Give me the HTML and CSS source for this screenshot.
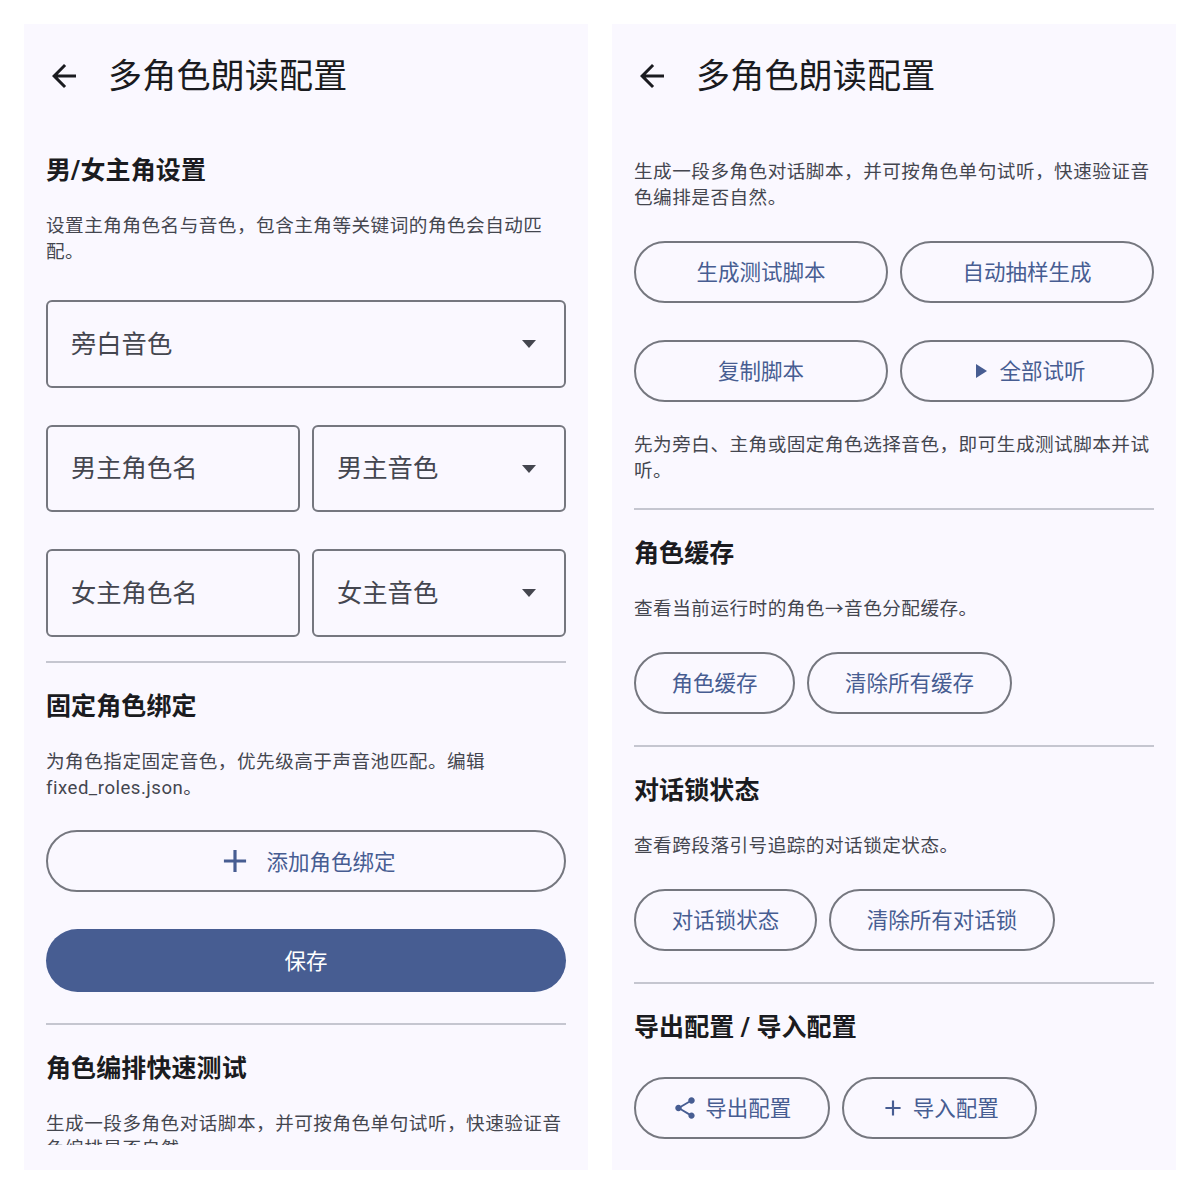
FILE: index.html
```html
<!DOCTYPE html>
<html lang="zh-CN">
<head>
    <meta charset="UTF-8">
    <meta name="viewport" content="width=device-width, initial-scale=1.0">
    <title>多角色朗读配置</title>
    <link rel="stylesheet" href="styles.css">
</head>
<body>
    <!-- Layar kiri -->
    <section class="screen">
        <header class="app-bar">
            <svg class="back-icon" viewBox="0 0 24 24"><path d="M20 11H7.83l5.59-5.59L12 4l-8 8 8 8 1.41-1.41L7.83 13H20v-2z"/></svg>
            <h1>多角色朗读配置</h1>
        </header>
        <div class="content content-top">
            <h2 class="heading">男/女主角设置</h2>
            <p class="desc">设置主角角色名与音色，包含主角等关键词的角色会自动匹配。</p>
            <div class="field field-first"><span>旁白音色</span><i class="caret"></i></div>
            <div class="field-row">
                <div class="field"><span>男主角色名</span></div>
                <div class="field"><span>男主音色</span><i class="caret"></i></div>
            </div>
            <div class="field-row">
                <div class="field"><span>女主角色名</span></div>
                <div class="field"><span>女主音色</span><i class="caret"></i></div>
            </div>
            <hr class="divider divider-fields">
            <h2 class="heading">固定角色绑定</h2>
            <p class="desc">为角色指定固定音色，优先级高于声音池匹配。编辑 fixed_roles.json。</p>
            <button class="btn btn-wide btn-add">
                <svg class="icon-add" viewBox="0 0 24 24"><path d="M19 13h-6v6h-2v-6H5v-2h6V5h2v6h6v2z"/></svg>
                <span>添加角色绑定</span>
            </button>
            <button class="btn-save"><span>保存</span></button>
            <hr class="divider divider-save">
            <h2 class="heading">角色编排快速测试</h2>
            <p class="desc">生成一段多角色对话脚本，并可按角色单句试听，快速验证音色编排是否自然。</p>
        </div>
    </section>

    <!-- Layar kanan -->
    <section class="screen">
        <header class="app-bar">
            <svg class="back-icon" viewBox="0 0 24 24"><path d="M20 11H7.83l5.59-5.59L12 4l-8 8 8 8 1.41-1.41L7.83 13H20v-2z"/></svg>
            <h1>多角色朗读配置</h1>
        </header>
        <div class="content content-scrolled">
            <p class="desc">生成一段多角色对话脚本，并可按角色单句试听，快速验证音色编排是否自然。</p>
            <div class="btn-grid">
                <button class="btn"><span>生成测试脚本</span></button>
                <button class="btn"><span>自动抽样生成</span></button>
                <button class="btn"><span>复制脚本</span></button>
                <button class="btn">
                    <svg class="icon-play" viewBox="0 0 24 24"><path d="M8 5v14l11-7z"/></svg>
                    <span>全部试听</span>
                </button>
            </div>
            <p class="desc desc-after">先为旁白、主角或固定角色选择音色，即可生成测试脚本并试听。</p>
            <hr class="divider">
            <h2 class="heading">角色缓存</h2>
            <p class="desc">查看当前运行时的角色→音色分配缓存。</p>
            <div class="btn-row">
                <button class="btn btn-a"><span>角色缓存</span></button>
                <button class="btn btn-b"><span>清除所有缓存</span></button>
            </div>
            <hr class="divider">
            <h2 class="heading">对话锁状态</h2>
            <p class="desc">查看跨段落引号追踪的对话锁定状态。</p>
            <div class="btn-row">
                <button class="btn btn-c"><span>对话锁状态</span></button>
                <button class="btn btn-d"><span>清除所有对话锁</span></button>
            </div>
            <hr class="divider">
            <h2 class="heading">导出配置 / 导入配置</h2>
            <div class="btn-row btn-row-last">
                <button class="btn btn-e">
                    <svg class="icon-small" viewBox="0 0 24 24"><path d="M18 16.08c-.76 0-1.44.3-1.96.77L8.91 12.7c.05-.23.09-.46.09-.7s-.04-.47-.09-.7l7.05-4.11c.54.5 1.25.81 2.04.81 1.66 0 3-1.34 3-3s-1.34-3-3-3-3 1.34-3 3c0 .24.04.47.09.7L8.04 9.81C7.5 9.31 6.79 9 6 9c-1.66 0-3 1.34-3 3s1.34 3 3 3c.79 0 1.5-.31 2.04-.81l7.12 4.16c-.05.21-.08.43-.08.65 0 1.61 1.31 2.92 2.92 2.92s2.92-1.31 2.92-2.92-1.31-2.92-2.92-2.92z"/></svg>
                    <span>导出配置</span>
                </button>
                <button class="btn btn-e">
                    <svg class="icon-small" viewBox="0 0 24 24"><path d="M19 13h-6v6h-2v-6H5v-2h6V5h2v6h6v2z"/></svg>
                    <span>导入配置</span>
                </button>
            </div>
        </div>
    </section>
</body>
</html>
```

FILE: styles.css
```css
* {
    box-sizing: border-box;
}

body {
    margin: 0;
    padding: 24px 24px 30px;
    display: flex;
    gap: 24px;
    background-color: #fff;
    font-family: Roboto, "Noto Sans CJK SC", sans-serif;
}

.screen {
    width: 564px;
    height: 1146px;
    background-color: #faf8ff;
    display: flex;
    flex-direction: column;
}

.app-bar {
    height: 104px;
    flex-shrink: 0;
    display: flex;
    align-items: center;
    padding-left: 22px;
}

.back-icon {
    width: 36px;
    height: 36px;
    fill: #1a1b20;
}

.app-bar h1 {
    margin: 0 0 0 26px;
    font-size: 34px;
    line-height: 48px;
    letter-spacing: 0.2px;
    font-weight: 400;
    color: #1a1b20;
}

.content {
    height: 1017px;
    overflow: hidden;
    padding: 0 22px;
}

.content-top {
    padding-top: 25px;
}

.content-scrolled {
    padding-top: 32px;
}

.heading {
    margin: 0;
    font-size: 25px;
    line-height: 36px;
    letter-spacing: 0.1px;
    font-weight: 700;
    color: #1a1b20;
}

.desc {
    margin: 25px 0 0;
    font-size: 18.6px;
    line-height: 25.5px;
    letter-spacing: 0.5px;
    color: #44464f;
}

.content-scrolled > .desc:first-child {
    margin-top: 0;
}

.desc-after {
    margin-top: 31px;
    margin-bottom: 24px;
}

.field {
    flex: 1;
    height: 87.5px;
    border: 2px solid #75777f;
    border-radius: 6px;
    display: flex;
    align-items: center;
    justify-content: space-between;
    padding: 0 28px 0 23px;
    font-size: 25.3px;
    color: #44464f;
}

.field span {
    padding-bottom: 4px;
}

.field-first {
    margin-top: 35px;
}

.field-row {
    display: flex;
    gap: 12px;
    margin-top: 37px;
}

.caret {
    width: 0;
    height: 0;
    margin-top: 1px;
    border-left: 7.5px solid transparent;
    border-right: 7.5px solid transparent;
    border-top: 8px solid #44464f;
}

.divider {
    margin: 0;
    border: none;
    border-top: 2px solid #c5c6d0;
}

.divider-fields {
    margin-top: 24.5px;
}

.divider-save {
    margin-top: 30.5px;
}

.content hr + .heading {
    margin-top: 26px;
}

.btn {
    height: 62px;
    border: 2px solid #75777f;
    border-radius: 31px;
    background: transparent;
    display: flex;
    align-items: center;
    justify-content: center;
    font-family: inherit;
    font-size: 21.5px;
    color: #475d92;
    padding: 0;
}

.btn span {
    padding-bottom: 4px;
}

.btn-wide {
    width: 100%;
}

.btn-add {
    margin-top: 29px;
    gap: 12px;
}

.btn-add span {
    padding-bottom: 2px;
}

.icon-add {
    width: 38px;
    height: 38px;
    fill: #475d92;
}

.btn-save {
    display: block;
    width: 100%;
    height: 63px;
    margin-top: 37px;
    border: none;
    border-radius: 32px;
    background-color: #475d92;
    font-family: inherit;
    font-size: 21.5px;
    color: #fff;
}

.btn-save span {
    display: block;
    padding-bottom: 2px;
}

.btn-grid {
    display: grid;
    grid-template-columns: 1fr 1fr;
    gap: 37px 12px;
    margin-top: 30px;
}

.icon-play {
    width: 24px;
    height: 24px;
    fill: #475d92;
    margin-right: 7px;
}

.btn-row {
    display: flex;
    gap: 12px;
    margin-top: 29.5px;
    margin-bottom: 31px;
}

.btn-row-last {
    margin-top: 31px;
    margin-bottom: 0;
}

.btn-a { width: 161px; }
.btn-b { width: 205px; }
.btn-c { width: 183px; }
.btn-d { width: 226px; }
.btn-e { width: 195.5px; }

.icon-small {
    width: 26px;
    height: 26px;
    fill: #475d92;
    margin-right: 7px;
}
```
